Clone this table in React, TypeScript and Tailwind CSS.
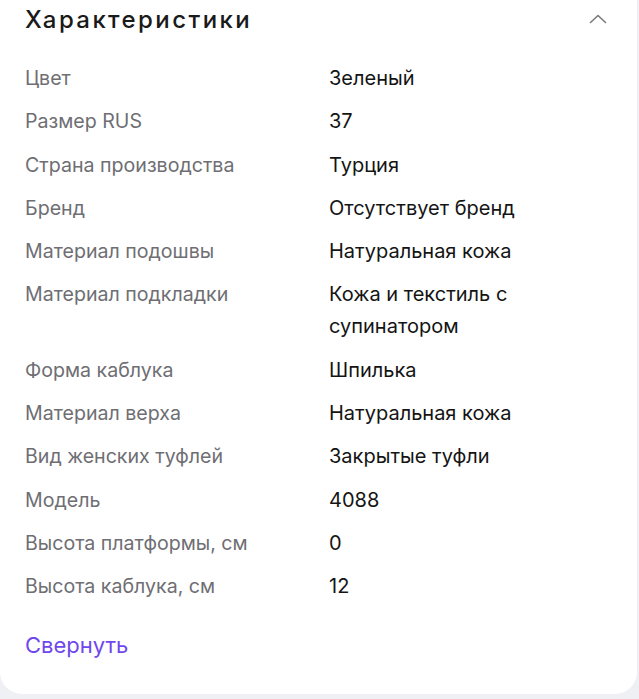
import React from "react";

const rows: [string, string][] = [
  ["Цвет", "Зеленый"],
  ["Размер RUS", "37"],
  ["Страна производства", "Турция"],
  ["Бренд", "Отсутствует бренд"],
  ["Материал подошвы", "Натуральная кожа"],
  ["Материал подкладки", "Кожа и текстиль с супинатором"],
  ["Форма каблука", "Шпилька"],
  ["Материал верха", "Натуральная кожа"],
  ["Вид женских туфлей", "Закрытые туфли"],
  ["Модель", "4088"],
  ["Высота платформы, см", "0"],
  ["Высота каблука, см", "12"],
];

export default function App() {
  return (
    <div
      className="w-[639px] h-[699px] bg-[#eff0f3] overflow-hidden"
      style={{ fontFamily: "Inter, 'Noto Sans', sans-serif" }}
    >
      <div className="bg-white rounded-b-[22px] w-[637px] pl-[25px] pr-[24px] pb-[33px]">
        <div className="h-[40px] flex items-center justify-between">
          <h2 className="text-[24px] font-medium tracking-[0.1em] text-[#1a1a1a]">
            Характеристики
          </h2>
          <svg width="18" height="10" viewBox="0 0 18 10" className="mr-[6px] mb-[2px]">
            <path d="M1.5 8.5 L9 1.5 L16.5 8.5" fill="none" stroke="#7a7a7a" strokeWidth="1.6" strokeLinecap="round" strokeLinejoin="round" />
          </svg>
        </div>
        <div className="mt-[22px] flex flex-col gap-[11.3px]">
          {rows.map(([k, v]) => (
            <div key={k} className="grid grid-cols-[304px_1fr] leading-[32px]">
              <div className="text-[19.6px] text-[#6e6e73]">{k}</div>
              <div className="text-[20px] text-[#141414]">{v}</div>
            </div>
          ))}
        </div>
        <div className="mt-[27px] text-[22px] leading-[32px] text-[#7047ec]">Свернуть</div>
      </div>
    </div>
  );
}
